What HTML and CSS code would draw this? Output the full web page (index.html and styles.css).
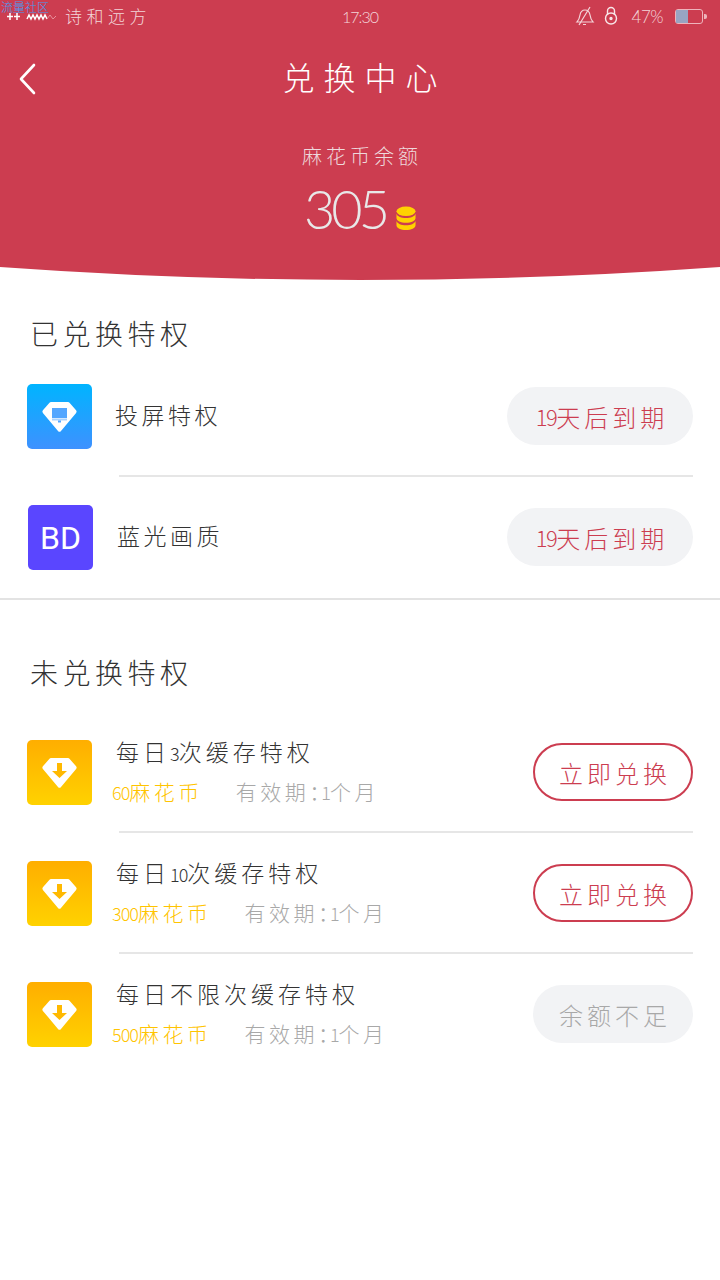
FILE: index.html
```html
<!DOCTYPE html>
<html lang="zh-CN">
<head>
  <meta charset="UTF-8">
  <meta name="viewport" content="width=device-width, initial-scale=1.0">
  <title>兑换中心</title>
  <link rel="stylesheet" href="styles.css">
</head>
<body>
  <svg width="0" height="0" class="defs">
    <defs>
      <linearGradient id="grad-blue" x1="0" y1="0" x2="0" y2="1">
        <stop offset="0" stop-color="#00b4ff"/>
        <stop offset="1" stop-color="#3e91ff"/>
      </linearGradient>
      <linearGradient id="grad-gold" x1="0" y1="0" x2="0" y2="1">
        <stop offset="0" stop-color="#ffae00"/>
        <stop offset="1" stop-color="#ffd200"/>
      </linearGradient>
      <symbol id="gem" viewBox="0 0 36 32">
        <path d="M9.500 1.500h17a2 2 0 0 1 1.500.7l6.600 7.600a2 2 0 0 1 0 2.600L19.500 30.400a2 2 0 0 1-3 0L1.400 12.400a2 2 0 0 1 0-2.600L8 2.200a2 2 0 0 1 1.500-.7z" fill="#fff"/>
      </symbol>
    </defs>
  </svg>

  <header class="top">
    <div class="status">
      <span class="carrier-tag">流量社区</span>
      <div class="status-left">
        <svg class="signal" width="56" height="12" viewBox="0 0 56 12">
          <path d="M10 3v7M17 3v7M7 6.500h6M14 6.500h6" stroke="#fff" stroke-width="1.500" fill="none"/>
          <path d="M27 9l2-4 2 4 2-4 2 4 2-4 2 4 2-4 2 4 2-4 2 4" stroke="#fff" stroke-width="1.500" fill="none"/>
          <path d="M47 9l3-4 3 4 3-3" stroke="#e88f9b" stroke-width="1" fill="none"/>
        </svg>
        <span class="carrier">诗和远方</span>
      </div>
      <span class="clock">17:30</span>
      <div class="status-right">
        <svg width="20" height="20" viewBox="0 0 20 20" fill="none" stroke="#f3d5d9" stroke-width="1.200">
          <path d="M2 16c2-2 2.500-4 3-7 .5-3 2.500-5 5-5s4.500 2 5 5c.5 3 1 5 3 7z"/>
          <path d="M8 18.500h3M15 1L4 19"/>
        </svg>
        <svg width="14" height="20" viewBox="0 0 14 20" fill="none" stroke="#f8e6e8" stroke-width="1.400">
          <path d="M3.500 9V5a3.500 3.500 0 0 1 7 0v4"/>
          <circle cx="7" cy="12.500" r="5.500"/>
          <circle cx="7" cy="12.500" r="1" fill="#f8e6e8"/>
        </svg>
        <span class="battery-pct">47%</span>
        <div class="battery"><div class="battery-fill"></div></div>
      </div>
    </div>

    <div class="nav">
      <svg class="back" width="20" height="32" viewBox="0 0 20 32" fill="none" stroke="#fff" stroke-width="2.600" stroke-linecap="round" stroke-linejoin="round">
        <path d="M16 2L3 16l13 14"/>
      </svg>
      <h1 class="nav-title">兑换中心</h1>
    </div>

    <div class="balance">
      <div class="balance-label">麻花币余额</div>
      <div class="balance-value">
        <span class="balance-num">305</span>
        <svg class="coins" width="20" height="25" viewBox="0 0 21 25" fill="#ffd200">
          <ellipse cx="10.500" cy="5" rx="10" ry="5"/>
          <path d="M.5 7.500c1 3 5 4.500 10 4.500s9-1.500 10-4.500V12c0 3-4.500 5-10 5s-10-2-10-5z"/>
          <path d="M.5 15c1 3 5 4.500 10 4.500s9-1.500 10-4.500v4.500c0 3-4.500 5-10 5s-10-2-10-5z"/>
        </svg>
      </div>
    </div>
    <svg class="curve" width="720" height="13" viewBox="0 0 720 13" preserveAspectRatio="none">
      <path d="M0 0Q360 26 720 0V13H0z" fill="#fff"/>
    </svg>
  </header>

  <section class="group group-owned">
    <h2 class="group-title">已兑换特权</h2>

    <div class="row row-first">
      <svg class="icon" width="65" height="65" viewBox="0 0 65 65">
        <rect width="65" height="65" rx="5" fill="url(#grad-blue)"/>
        <use href="#gem" x="14.500" y="16.500" width="36" height="32"/>
        <rect x="25" y="24" width="15" height="10" fill="#54a6ff"/>
        <rect x="25" y="34.500" width="15" height="2" fill="#a9d2ff"/>
        <rect x="31" y="36.500" width="3" height="2" fill="#54a6ff"/>
      </svg>
      <div class="row-body"><div class="row-name">投屏特权</div></div>
      <span class="pill pill-expire"><span class="num">19</span>天后到期</span>
    </div>

    <div class="row">
      <div class="icon icon-bd">BD</div>
      <div class="row-body"><div class="row-name">蓝光画质</div></div>
      <span class="pill pill-expire"><span class="num">19</span>天后到期</span>
    </div>
  </section>

  <section class="group group-open">
    <h2 class="group-title">未兑换特权</h2>

    <div class="row">
      <svg class="icon" width="65" height="65" viewBox="0 0 65 65">
        <rect width="65" height="65" rx="5" fill="url(#grad-gold)"/>
        <use href="#gem" x="14.500" y="16.500" width="36" height="32"/>
        <path d="M30 23h5v8h5l-7.500 7-7.500-7h5z" fill="#ffb900"/>
      </svg>
      <div class="row-body">
        <div class="row-name">每日<span class="num">3</span>次缓存特权</div>
        <div class="row-meta"><span class="price"><span class="num">60</span>麻花币</span><span class="term">有效期<span class="colon">：</span><span class="num">1</span>个月</span></div>
      </div>
      <span class="pill pill-buy">立即兑换</span>
    </div>

    <div class="row">
      <svg class="icon" width="65" height="65" viewBox="0 0 65 65">
        <rect width="65" height="65" rx="5" fill="url(#grad-gold)"/>
        <use href="#gem" x="14.500" y="16.500" width="36" height="32"/>
        <path d="M30 23h5v8h5l-7.500 7-7.500-7h5z" fill="#ffb900"/>
      </svg>
      <div class="row-body">
        <div class="row-name">每日<span class="num">10</span>次缓存特权</div>
        <div class="row-meta"><span class="price"><span class="num">300</span>麻花币</span><span class="term">有效期<span class="colon">：</span><span class="num">1</span>个月</span></div>
      </div>
      <span class="pill pill-buy">立即兑换</span>
    </div>

    <div class="row">
      <svg class="icon" width="65" height="65" viewBox="0 0 65 65">
        <rect width="65" height="65" rx="5" fill="url(#grad-gold)"/>
        <use href="#gem" x="14.500" y="16.500" width="36" height="32"/>
        <path d="M30 23h5v8h5l-7.500 7-7.500-7h5z" fill="#ffb900"/>
      </svg>
      <div class="row-body">
        <div class="row-name">每日不限次缓存特权</div>
        <div class="row-meta"><span class="price"><span class="num">500</span>麻花币</span><span class="term">有效期<span class="colon">：</span><span class="num">1</span>个月</span></div>
      </div>
      <span class="pill pill-none">余额不足</span>
    </div>
  </section>
</body>
</html>
```

FILE: styles.css
```css
* {
  box-sizing: border-box;
}

body {
  margin: 0;
  width: 720px;
  height: 1280px;
  overflow: hidden;
  background: #fff;
  color: #333;
  font-family: "Noto Sans CJK SC", "Noto Sans", sans-serif;
  font-weight: 300;
}

.defs {
  position: absolute;
}

/* red header */
.top {
  position: relative;
  height: 280px;
  background: #cc3d50;
  color: #fff;
}

.status {
  position: relative;
  height: 32px;
  display: flex;
  align-items: center;
  justify-content: space-between;
  color: #f3d5d9;
}

.carrier-tag {
  position: absolute;
  left: 1px;
  top: 0;
  font-size: 12px;
  line-height: 13px;
  color: #4a9cf0;
}

.status-left {
  display: flex;
  align-items: center;
  width: 200px;
}

.signal {
  margin-right: 9px;
}

.carrier {
  font-size: 17px;
  line-height: 30px;
  letter-spacing: 4.500px;
}

.clock {
  font-size: 16px;
  letter-spacing: -1px;
  text-align: center;
  font-family: "Lato", sans-serif;
}

.status-right {
  display: flex;
  align-items: center;
  justify-content: flex-end;
  gap: 9px;
  width: 200px;
  padding-right: 17px;
}

.battery-pct {
  font-size: 17px;
  letter-spacing: -.5px;
  font-family: "Lato", sans-serif;
  margin: 0 3px 0 5px;
}

.battery {
  position: relative;
  width: 28px;
  height: 15px;
  border: 1px solid #eeb4bc;
  border-radius: 3px;
}

.battery::after {
  content: "";
  position: absolute;
  right: -5px;
  top: 4px;
  width: 3px;
  height: 5px;
  background: #eeb4bc;
  border-radius: 0 2px 2px 0;
}

.battery-fill {
  width: 12px;
  height: 100%;
  background: #98a4c3;
}

.nav {
  position: relative;
  height: 93px;
  display: flex;
  justify-content: center;
  padding-top: 21px;
}

.back {
  position: absolute;
  left: 18px;
  top: 31px;
}

.nav-title {
  margin: 0;
  font-size: 32px;
  line-height: 46px;
  font-weight: 300;
  letter-spacing: 9px;
  padding-left: 9px;
}

.balance {
  text-align: center;
  color: #eed9dc;
}

.balance-label {
  font-size: 20px;
  line-height: 26px;
  letter-spacing: 4px;
  padding-left: 4px;
  margin-top: 18px;
}

.balance-value {
  display: flex;
  justify-content: center;
  align-items: flex-end;
  gap: 10px;
  margin-top: 10px;
}

.balance-num {
  font-family: "Lato", sans-serif;
  font-weight: 300;
  font-size: 54px;
  line-height: 60px;
  letter-spacing: -4px;
  color: #e8e8e8;
}

.coins {
  margin-bottom: 8px;
}

.curve {
  position: absolute;
  left: 0;
  bottom: 0;
  display: block;
}

/* privilege lists */
.group-owned {
  height: 320px;
  padding-top: 33px;
  border-bottom: 2px solid #e3e3e3;
}

.group-open {
  padding-top: 52px;
}

.group-title {
  margin: 0 0 0 30px;
  font-size: 28px;
  line-height: 40px;
  font-weight: 300;
  letter-spacing: 4.500px;
}

.group-owned .group-title {
  margin-bottom: 3px;
}

.group-open .group-title {
  margin-bottom: 20px;
}

.row {
  position: relative;
  height: 121px;
  display: flex;
  align-items: center;
  padding: 0 27px;
}

.row + .row::before {
  content: "";
  position: absolute;
  left: 119px;
  right: 27px;
  top: -2px;
  height: 2px;
  background: #e6e6e6;
}

.icon {
  flex: none;
  width: 65px;
  height: 65px;
  display: block;
}

.icon-bd {
  display: flex;
  align-items: center;
  justify-content: center;
  margin-left: 1px;
  border-radius: 5px;
  background: #5a46ff;
  color: #fff;
  font-family: "Roboto", sans-serif;
  font-size: 32px;
  font-weight: 400;
}

.row-body {
  flex: 1;
  padding: 0 0 5px 24px;
}

.row-first .row-body {
  padding-left: 23px;
}

.row-name {
  font-size: 23px;
  line-height: 32px;
  letter-spacing: 4px;
}

.group-owned .row-name {
  letter-spacing: 3.500px;
}

.num {
  font-size: 18px;
  line-height: 1;
  letter-spacing: -1px;
}

.row-meta {
  display: flex;
  font-size: 21px;
  line-height: 28px;
  margin-top: 10px;
  margin-left: -4px;
  letter-spacing: 3.500px;
}

.colon {
  letter-spacing: -9px;
}

.price {
  color: #ffc400;
  margin-right: 33px;
}

.term {
  color: #a8a8a8;
}

.pill {
  flex: none;
  height: 58px;
  margin-top: -1px;
  padding-left: 4px;
  border-radius: 29px;
  display: flex;
  align-items: center;
  justify-content: center;
  font-size: 24px;
  letter-spacing: 4px;
}

.pill .num {
  font-size: 22px;
  letter-spacing: -1.500px;
}

.pill-expire {
  width: 186px;
  background: #f2f3f5;
  color: #cc3d50;
}

.pill-buy {
  width: 160px;
  border: 2px solid #cc3d50;
  color: #cc3d50;
}

.pill-none {
  width: 160px;
  background: #f2f3f5;
  color: #a8a8a8;
}
```
